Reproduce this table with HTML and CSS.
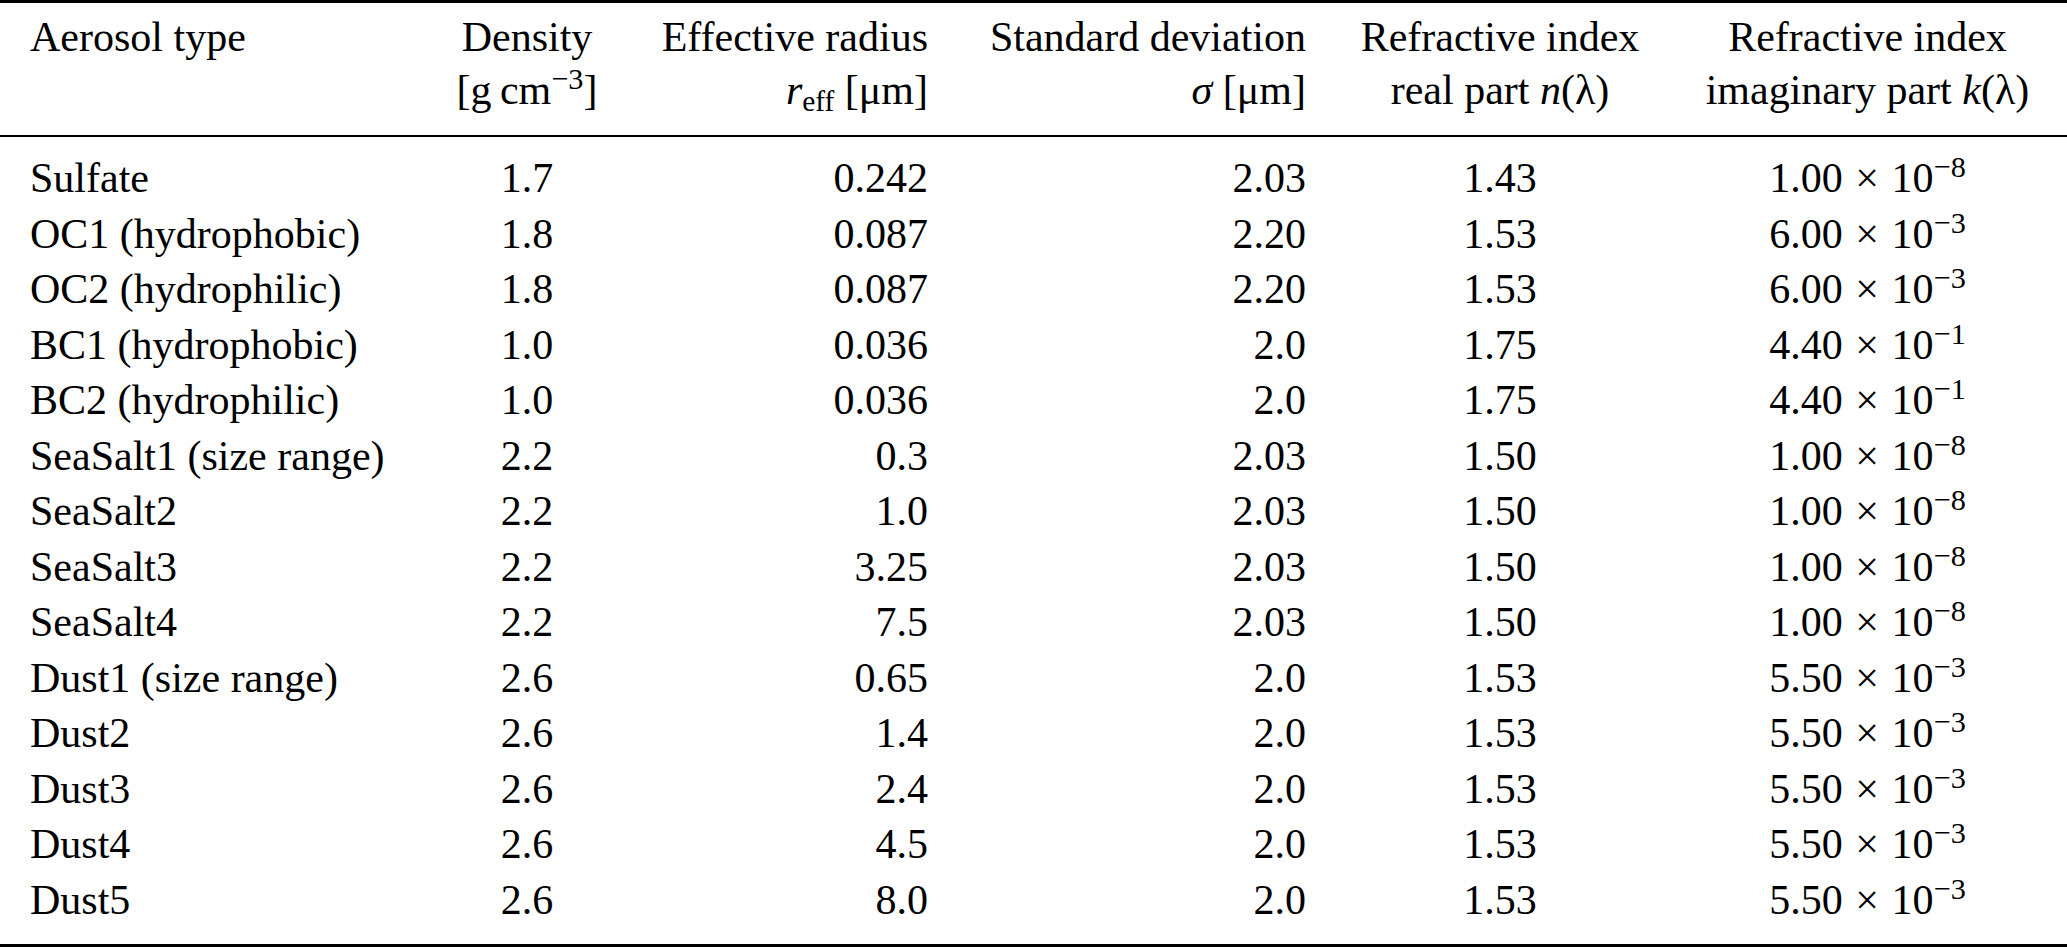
FILE: index.html
```html
<!DOCTYPE html>
<html lang="en">
<head>
<meta charset="utf-8">
<title>Aerosol optical properties</title>
<link rel="stylesheet" href="styles.css">
</head>
<body>
<table class="aerosol">
  <colgroup>
    <col class="c1"><col class="c2"><col class="c3"><col class="c4"><col class="c5"><col class="c6">
  </colgroup>
  <thead>
    <tr>
      <th>Aerosol type</th>
      <th>Density<br>[g&thinsp;cm<span class="sup">−3</span>]</th>
      <th>Effective radius<br><i>r</i><span class="sub">eff</span> [μm]</th>
      <th>Standard deviation<br><i>σ</i> [μm]</th>
      <th>Refractive index<br>real part <i>n</i>(λ)</th>
      <th>Refractive index<br>imaginary part <i>k</i>(λ)</th>
    </tr>
  </thead>
  <tbody>
    <tr><td>Sulfate</td><td>1.7</td><td>0.242</td><td>2.03</td><td>1.43</td><td>1.00<span class="times">×</span>10<span class="sup">−8</span></td></tr>
    <tr><td>OC1 (hydrophobic)</td><td>1.8</td><td>0.087</td><td>2.20</td><td>1.53</td><td>6.00<span class="times">×</span>10<span class="sup">−3</span></td></tr>
    <tr><td>OC2 (hydrophilic)</td><td>1.8</td><td>0.087</td><td>2.20</td><td>1.53</td><td>6.00<span class="times">×</span>10<span class="sup">−3</span></td></tr>
    <tr><td>BC1 (hydrophobic)</td><td>1.0</td><td>0.036</td><td>2.0</td><td>1.75</td><td>4.40<span class="times">×</span>10<span class="sup">−1</span></td></tr>
    <tr><td>BC2 (hydrophilic)</td><td>1.0</td><td>0.036</td><td>2.0</td><td>1.75</td><td>4.40<span class="times">×</span>10<span class="sup">−1</span></td></tr>
    <tr><td>SeaSalt1 (size range)</td><td>2.2</td><td>0.3</td><td>2.03</td><td>1.50</td><td>1.00<span class="times">×</span>10<span class="sup">−8</span></td></tr>
    <tr><td>SeaSalt2</td><td>2.2</td><td>1.0</td><td>2.03</td><td>1.50</td><td>1.00<span class="times">×</span>10<span class="sup">−8</span></td></tr>
    <tr><td>SeaSalt3</td><td>2.2</td><td>3.25</td><td>2.03</td><td>1.50</td><td>1.00<span class="times">×</span>10<span class="sup">−8</span></td></tr>
    <tr><td>SeaSalt4</td><td>2.2</td><td>7.5</td><td>2.03</td><td>1.50</td><td>1.00<span class="times">×</span>10<span class="sup">−8</span></td></tr>
    <tr><td>Dust1 (size range)</td><td>2.6</td><td>0.65</td><td>2.0</td><td>1.53</td><td>5.50<span class="times">×</span>10<span class="sup">−3</span></td></tr>
    <tr><td>Dust2</td><td>2.6</td><td>1.4</td><td>2.0</td><td>1.53</td><td>5.50<span class="times">×</span>10<span class="sup">−3</span></td></tr>
    <tr><td>Dust3</td><td>2.6</td><td>2.4</td><td>2.0</td><td>1.53</td><td>5.50<span class="times">×</span>10<span class="sup">−3</span></td></tr>
    <tr><td>Dust4</td><td>2.6</td><td>4.5</td><td>2.0</td><td>1.53</td><td>5.50<span class="times">×</span>10<span class="sup">−3</span></td></tr>
    <tr><td>Dust5</td><td>2.6</td><td>8.0</td><td>2.0</td><td>1.53</td><td>5.50<span class="times">×</span>10<span class="sup">−3</span></td></tr>
  </tbody>
</table>
</body>
</html>
```

FILE: styles.css
```css
html, body {
  margin: 0;
  padding: 0;
  background: #ffffff;
}

body {
  font-family: "Liberation Serif", "Times New Roman", serif;
  font-size: 42px;
  color: #000000;
}

.aerosol {
  width: 2067px;
  table-layout: fixed;
  border-collapse: separate;
  border-spacing: 0;
}

.aerosol .c1 { width: 440px; }
.aerosol .c2 { width: 174px; }
.aerosol .c3 { width: 326px; }
.aerosol .c4 { width: 378px; }
.aerosol .c5 { width: 364px; }
.aerosol .c6 { width: 385px; }

.aerosol th,
.aerosol td {
  padding: 0;
  white-space: nowrap;
  vertical-align: top;
}

.aerosol th {
  font-weight: normal;
  line-height: 53px;
  border-top: 3px solid #000;
  border-bottom: 2px solid #000;
  padding-top: 8px;
  padding-bottom: 18px;
}

.aerosol td {
  line-height: 55.5px;
}

.aerosol tbody tr:first-child td {
  padding-top: 14px;
}

.aerosol tbody tr:last-child td {
  padding-bottom: 16px;
  border-bottom: 3px solid #000;
}

.aerosol th:nth-child(1),
.aerosol td:nth-child(1) {
  text-align: left;
  padding-left: 30px;
}

.aerosol th:nth-child(2),
.aerosol td:nth-child(2) {
  text-align: center;
}

.aerosol th:nth-child(3),
.aerosol td:nth-child(3) {
  text-align: right;
  padding-right: 12px;
}

.aerosol th:nth-child(4),
.aerosol td:nth-child(4) {
  text-align: right;
  padding-right: 12px;
}

.aerosol th:nth-child(5),
.aerosol td:nth-child(5) {
  text-align: center;
}

.aerosol th:nth-child(6),
.aerosol td:nth-child(6) {
  text-align: center;
  padding-right: 14px;
}

.times {
  margin: 0 0.3em;
}

.sup {
  font-size: 0.72em;
  line-height: 0;
  vertical-align: 0.5em;
}

.sub {
  font-size: 0.7em;
  line-height: 0;
  vertical-align: -0.25em;
}

i {
  font-style: italic;
}
```
